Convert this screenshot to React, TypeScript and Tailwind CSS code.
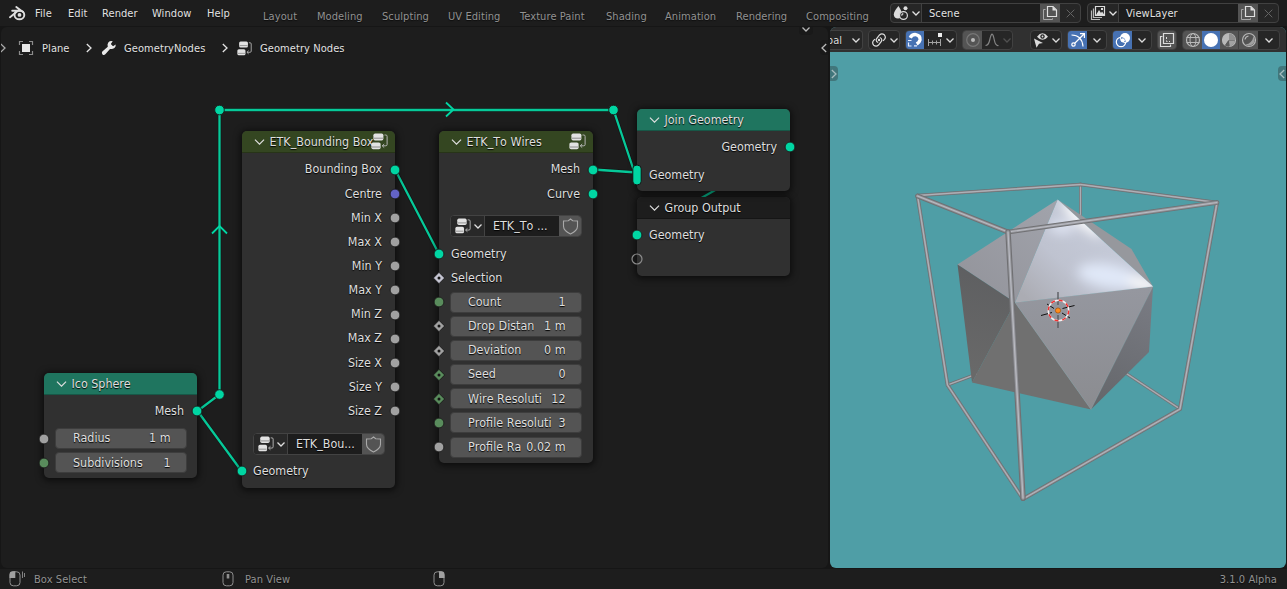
import React from "react";
import clsx from "clsx";

type Kids = { children?: React.ReactNode };

const Chevron = ({ w = 8, thin = false, className = "" }: { w?: number; thin?: boolean; className?: string }) => (
  <svg width={w} height={w / 2 + 1} viewBox="0 0 8 5" className={clsx("shrink-0", className)} fill="none" stroke="currentColor" strokeWidth={thin ? 0.9 : 1.3}>
    <path d="M.5.5 4 4 7.500.500" />
  </svg>
);

const ChevronRight = ({ className = "" }: { className?: string }) => (
  <svg width="6" height="10" viewBox="0 0 6 10" className={clsx("shrink-0", className)} fill="none" stroke="currentColor" strokeWidth="1.3">
    <path d="M.8 1 5 5 .8 9" />
  </svg>
);

const NodeTreeIcon = ({ size = 17 }: { size?: number }) => (
  <svg width={size} height={size} viewBox="0 0 17 17" className="shrink-0">
    <rect x="2.400" y=".6" width="10" height="6.800" rx="1.700" fill="#e2e2e2" />
    <rect x=".4" y="9.400" width="9.200" height="6.800" rx="1.700" fill="#e2e2e2" />
    <path d="M3 5.200h9M1 14h8" stroke="#777" strokeWidth=".8" />
    <path d="M13.500 2h1.300q1.300 0 1.300 1.300v8.200q0 1.300-1.300 1.300h-3.400M13.200 11l-2 1.800 2 1.800" fill="none" stroke="#b5b5b5" />
  </svg>
);

const Shield = () => (
  <svg width="17" height="17" viewBox="0 0 17 17" fill="none" stroke="#a8a8a8" strokeWidth="1.1">
    <path d="M8.500 1 10.700 2.800l4.800.2v5.200q0 4.400-7 7.700-7-3.300-7-7.700V3l4.800-.2z" />
  </svg>
);

const CopyIcon = () => (
  <svg width="16" height="16" viewBox="0 0 16 16" className="shrink-0" fill="none" stroke="#e0e0e0">
    <path d="M5.500 1.500H11L14.500 5v6.500h-9z" strokeWidth="1.200" />
    <path d="M10.500 1.500 14.500 5.500h-4z" fill="#e0e0e0" stroke="none" />
    <path d="M3.500 4.500h-2v10h9v-1.200" stroke="#a8a8a8" />
  </svg>
);

const CloseIcon = () => (
  <svg width="9" height="9" viewBox="0 0 9 9" stroke="#646464" strokeWidth="1">
    <path d="m.7.7 7.600 7.600M8.300.7.7 8.300" />
  </svg>
);

type SocketKind = "geo" | "vec" | "float" | "int" | "floatField" | "intField" | "selField" | "empty" | "multi";

const Socket = ({ kind, side }: { kind: SocketKind; side: "l" | "r" }) => {
  const fill = { geo: "#00d6a3", multi: "#00d6a3", vec: "#6363c7", float: "#a1a1a1", int: "#598c5c", floatField: "#a1a1a1", intField: "#598c5c", selField: "#c5c5d2", empty: "none" }[kind];
  const field = kind.endsWith("Field");
  return (
    <svg width="16" height="26" viewBox="-8 -13 16 26" className={clsx("absolute top-1/2 -translate-y-1/2", side === "l" ? "-left-2" : "-right-2")}>
      {field ? (
        <>
          <path d="M0-5.700 5.700 0 0 5.700-5.700 0z" fill={fill} stroke="#1a1a1a" strokeWidth="1" />
          <circle r="1.500" fill="#151515" />
        </>
      ) : kind === "multi" ? (
        <rect x="-4.200" y="-9.800" width="8.400" height="19.600" rx="3.600" fill={fill} stroke="#151515" />
      ) : (
        <circle r={kind === "empty" ? 5 : 4.9} fill={fill} stroke={kind === "empty" ? "#8b8b8b" : "#1a1a1a"} strokeWidth={kind === "empty" ? 1.2 : 0.9} />
      )}
    </svg>
  );
};

const Row = ({ kind, side = "l", children, className = "h-[24.17px]" }: { kind: SocketKind; side?: "l" | "r"; className?: string } & Kids) => (
  <div className={clsx("relative flex shrink-0 items-center px-3", side === "r" && "justify-end pr-[13px]", className)}>
    <Socket kind={kind} side={side} />
    {children}
  </div>
);

const Field = ({ kind, name, value }: { kind: SocketKind; name: string; value: string }) => (
  <Row kind={kind}>
    <div className="-ml-px flex h-[21px] w-[132px] shrink-0 items-center justify-between rounded-[4px] border border-[#3d3d3d] bg-[#545454] pr-[15.500px] pl-[17px]">
      <span className="whitespace-nowrap">{name}</span>
      <span className="whitespace-nowrap">{value}</span>
    </div>
  </Row>
);

const TreePicker = ({ name }: { name: string }) => (
  <div className="ml-[11px] flex h-[22px] w-[132px] shrink-0 overflow-hidden rounded-[4px] border border-[#434343] bg-[#1d1d1d]">
    <div className="flex w-[34px] items-center gap-[3px] border-r border-[#434343] bg-[#282828] pl-[4px]">
      <NodeTreeIcon size={16} />
      <Chevron w={8} />
    </div>
    <div className="flex flex-1 items-center pl-2 whitespace-nowrap">{name}</div>
    <div className="flex w-[22px] items-center justify-center bg-[#545454]">
      <Shield />
    </div>
  </div>
);

const Node = ({ title, pos, head, icon, children }: { title: string; pos: string; head: string; icon?: boolean } & Kids) => (
  <div className={clsx("absolute flex flex-col rounded-[5px] bg-[#303030] shadow-[0_1px_6px_2px_rgba(0,0,0,0.55)]", pos)}>
    <div className={clsx("relative flex h-[22px] shrink-0 items-center gap-[5px] rounded-t-[5px] border-b border-black/25 pt-px pl-[11.500px] whitespace-nowrap", head)}>
      <Chevron w={11} thin />
      <span>{title}</span>
      {icon && (
        <span className="absolute top-[2px] right-[7px]">
          <NodeTreeIcon />
        </span>
      )}
    </div>
    {children}
  </div>
);

const Group = ({ className, children }: { className: string } & Kids) => (
  <div className={clsx("flex shrink-0 overflow-hidden rounded-[4px] border border-[#414141] bg-[#262626]", className)}>{children}</div>
);

const Cell = ({ className, children }: { className: string } & Kids) => (
  <div className={clsx("flex shrink-0 items-center justify-center", className)}>{children}</div>
);

const Ico = ({ children, color = "#dcdcdc" }: { color?: string } & Kids) => (
  <svg width="16" height="16" viewBox="0 0 16 16" fill="none" stroke={color} strokeWidth="1.200" className="shrink-0">
    {children}
  </svg>
);

const menus: [string, string][] = [
  ["File", "w-[33px]"],
  ["Edit", "w-[34px]"],
  ["Render", "w-[50px]"],
  ["Window", "w-[55px]"],
  ["Help", "w-[56px]"],
];
const tabs: [string, string][] = [
  ["Layout", "w-[54px]"],
  ["Modeling", "w-[65px]"],
  ["Sculpting", "w-[66px]"],
  ["UV Editing", "w-[72px]"],
  ["Texture Paint", "w-[86px]"],
  ["Shading", "w-[59px]"],
  ["Animation", "w-[71px]"],
  ["Rendering", "w-[70px]"],
  ["Compositing", "w-[84px]"],
];

const TopBar = () => (
  <header className="flex h-[26px] shrink-0 bg-[#1d1d1d]">
    <div className="flex w-[35px] items-center pl-[9px]">
      <svg width="17" height="15" viewBox="0 0 17 15" fill="none" stroke="#dedede">
        <path d="M7.300 1 14 6.100M3.200 4.700h8M1 11.200l7-5.600" strokeWidth="1.900" strokeLinecap="round" />
        <ellipse cx="10.400" cy="8.900" rx="4.900" ry="4.400" strokeWidth="1.900" />
        <circle cx="10.500" cy="8.900" r="1.900" fill="#dedede" stroke="none" />
      </svg>
    </div>
    {menus.map(([t, w]) => (
      <div key={t} className={clsx("flex items-center text-[#e2e2e2]", w)}>{t}</div>
    ))}
    {tabs.map(([t, w]) => (
      <div key={t} className={clsx("flex items-center pt-[6px] whitespace-nowrap text-[#929292]", w)}>{t}</div>
    ))}
    <div className="flex items-center gap-[6px]">
      <Group className="h-5 w-[191px]">
        <Cell className="w-[31px] gap-[3px] border-r border-[#414141]">
          <Ico>
            <path d="M5.500 1Q9 6.500 9 9.500q0 4-4 4t-4.200-4Q.8 6.500 5.500 1z" fill="#dcdcdc" stroke="none" />
            <circle cx="10.500" cy="10.500" r="3.900" fill="#262626" />
            <path d="M8.600 10.600q.3-1.600 1.700-2" />
            <circle cx="12.500" cy="3.200" r="2" fill="#dcdcdc" stroke="none" />
          </Ico>
          <Chevron />
        </Cell>
        <div className="flex flex-1 items-center bg-[#1d1d1d] pl-[7px] text-[#e2e2e2]">Scene</div>
        <Cell className="w-5 bg-[#545454]"><CopyIcon /></Cell>
        <Cell className="w-5"><CloseIcon /></Cell>
      </Group>
      <Group className="h-5 w-[192px]">
        <Cell className="w-[31px] gap-[3px] border-r border-[#414141]">
          <Ico>
            <path d="M5.500 1.500h9v9h-9z" />
            <path d="m6 10 3-5 2 3 1-1.500 2.500 3.500zM11 3h2v2h-2z" fill="#dcdcdc" stroke="none" />
            <path d="M3.500 3.500v9H12M1.500 5.500v9H10" stroke="#b8b8b8" />
          </Ico>
          <Chevron />
        </Cell>
        <div className="flex flex-1 items-center bg-[#1d1d1d] pl-[7px] text-[#e2e2e2]">ViewLayer</div>
        <Cell className="w-5 bg-[#545454]"><CopyIcon /></Cell>
        <Cell className="w-5"><CloseIcon /></Cell>
      </Group>
    </div>
  </header>
);

const Links = () => (
  <svg className="absolute inset-0" width="827" height="542" viewBox="1 27 827 542" fill="none" strokeWidth="2.300">
    <path d="M197.500 411 219.500 394.500V110H613.500L634 171M197.500 411 241.500 471M395 169.500 439 254M593 169.500 637 172.500" stroke="#111" strokeWidth="3.800" opacity=".6" />
    <path d="M197.500 411 219.500 394.500V110H613.500L634 171M197.500 411 241.500 471M395 169.500 439 254M593 169.500 637 172.500M790 147 637 235" stroke="#06c999" />
    <path d="m212 233.500 7.500-7.500 7.500 7.500M446 102.500l7.500 7-7.500 7" stroke="#00d6a3" strokeWidth="1.800" />
    <g fill="#00d6a3" stroke="#1a1a1a" strokeWidth=".9">
      <circle cx="219.500" cy="394.500" r="4.800" />
      <circle cx="219.500" cy="110" r="4.800" />
      <circle cx="613.500" cy="110" r="4.800" />
    </g>
  </svg>
);

const boxOutputs = ["Min X", "Max X", "Min Y", "Max Y", "Min Z", "Max Z", "Size X", "Size Y", "Size Z"];
const wireInputs: [SocketKind, string, string][] = [
  ["int", "Count", "1"],
  ["floatField", "Drop Distan", "1 m"],
  ["floatField", "Deviation", "0 m"],
  ["intField", "Seed", "0"],
  ["intField", "Wire Resoluti", "12"],
  ["int", "Profile Resoluti", "3"],
  ["float", "Profile Ra", "0.02 m"],
];

const NodeEditor = () => (
  <section className="relative ml-px w-[827px] shrink-0 overflow-hidden rounded-[6px] bg-[#1d1d1d]">
    <div className="flex h-[42px] items-center text-[#e2e2e2]">
      <ChevronRight className="-ml-px text-[#aaa]" />
      <svg width="16" height="16" viewBox="0 0 16 16" className="ml-[12px]" fill="none" stroke="#8c8c8c" strokeWidth="1.200">
        <path d="M1.500 5V1.500H5M11 1.500h3.500V5M14.500 11v3.500H11M5 14.500H1.500V11" />
        <rect x="4" y="4" width="8" height="8" fill="#e8e8e8" stroke="none" />
      </svg>
      <span className="ml-2 w-[44px]">Plane</span>
      <ChevronRight />
      <svg width="16" height="16" viewBox="0 0 16 16" className="ml-[9px]">
        <path d="M14.700 4.400 12 6.200 9.800 4.100 11.700 1.200Q9 .5 7.300 2.500 6 4.200 6.800 6.700L1.300 11.500Q.3 13 1.500 14.400 3 15.500 4.300 14.300L9 8.900Q11.500 9.600 13.400 8 15 6.500 14.700 4.400Z" fill="#e8e8e8" />
      </svg>
      <span className="ml-[7px] w-[98px]">GeometryNodes</span>
      <ChevronRight />
      <span className="ml-[9px] w-[23px]"><NodeTreeIcon size={15} /></span>
      <span>Geometry Nodes</span>
    </div>
    <div className="absolute top-0 right-[15px] flex h-2 w-[14px] items-start justify-center rounded-b bg-[#191919] text-[#b8b8b8]"><Chevron w={8} /></div>
    <div className="absolute top-[13px] right-0 flex h-[15px] w-[8px] items-center rounded-l bg-[#191919] pl-px text-[#b8b8b8]"><ChevronRight className="rotate-180" /></div>
    <Links />
    <div className="text-[12.4px] leading-none tracking-normal text-[#dfdfdf] [text-shadow:0_1px_1px_#000]">
      <Node title="Group Output" pos="left-[636px] top-[170px] h-[79px] w-[153px]" head="bg-[#1d1d1d]">
        <Row kind="geo" className="mt-[4px] h-6">Geometry</Row>
        <Row kind="empty" className="h-[24px]" />
      </Node>
      <Node title="Join Geometry" pos="left-[636px] top-[82px] h-[82px] w-[153px]" head="bg-[#1f755f]">
        <Row kind="geo" side="r" className="mt-[4px] h-6">Geometry</Row>
        <Row kind="multi" className="mt-[4px] h-6">Geometry</Row>
      </Node>
      <Node title="ETK_Bounding Box" icon pos="left-[241px] top-[104px] h-[357px] w-[153px]" head="bg-[#344621]">
        <div className="h-[4.500px] shrink-0" />
        <Row kind="geo" side="r">Bounding Box</Row>
        <Row kind="vec" side="r">Centre</Row>
        {boxOutputs.map((o) => (
          <Row key={o} kind="float" side="r">{o}</Row>
        ))}
        <div className="h-[10px] shrink-0" />
        <TreePicker name="ETK_Bou..." />
        <Row kind="geo" className="mt-[4px] h-6">
          <span className="-ml-px">Geometry</span>
        </Row>
      </Node>
      <Node title="ETK_To Wires" icon pos="left-[438px] top-[104px] h-[332px] w-[154px] [font-kerning:none]" head="bg-[#344621]">
        <div className="h-[4.500px] shrink-0" />
        <Row kind="geo" side="r">Mesh</Row>
        <Row kind="geo" side="r">Curve</Row>
        <div className="h-[9.500px] shrink-0" />
        <TreePicker name="ETK_To ..." />
        <div className="h-[4.500px] shrink-0" />
        <Row kind="geo">Geometry</Row>
        <Row kind="selField">Selection</Row>
        {wireInputs.map(([k, n, v]) => (
          <Field key={n} kind={k} name={n} value={v} />
        ))}
      </Node>
      <Node title="Ico Sphere" pos="left-[43px] top-[346px] h-[105px] w-[153px]" head="bg-[#1f755f]">
        <Row kind="geo" side="r" className="mt-[4px] h-6">Mesh</Row>
        <div className="h-[3.500px] shrink-0" />
        <Field kind="float" name="Radius" value="1 m" />
        <Field kind="int" name="Subdivisions" value="1" />
      </Node>
    </div>
  </section>
);

const ViewHeader = () => (
  <div className="flex h-[25px] shrink-0 items-center bg-[#303030] pt-px text-[#dcdcdc]">
    <Group className="h-5 w-[33px] rounded-l-none border-l-0">
      <Cell className="w-[32px] gap-[10px]"><span className="-ml-[5px]">bal</span><Chevron /></Cell>
    </Group>
    <Group className="ml-[5px] h-5 w-8">
      <Cell className="w-[30px] gap-[3px]">
        <Ico>
          <path d="M7.200 10.500Q4.500 9.500 5.500 6.800L8.500 3q2.300-2.200 4.800-.200 2 2.300.200 4.500L12 8.800M8.800 5.500Q11.500 6.500 10.500 9.200L7.500 13q-2.300 2.200-4.800.200-2-2.300-.200-4.500L4 7.200" />
          <circle cx="8" cy="8" r="1.200" fill="#dcdcdc" stroke="none" />
        </Ico>
        <Chevron />
      </Cell>
    </Group>
    <Group className="ml-[5px] h-5 w-[52px]">
      <Cell className="w-[18px] bg-[#4772b3]">
        <Ico color="#fff">
          <path d="M3.200 5.800Q5 2.300 8.800 2.600q4.700.900 4.200 5.200-.500 2.400-3.300 4.200" strokeWidth="3.400" />
          <path d="M1 8.500h3.500M1.500 10.500V14h3M7 13.800h3" stroke="#e6edff" />
        </Ico>
      </Cell>
      <Cell className="w-[32px] gap-[3px]">
        <Ico>
          <path d="M1.500 7v7M5.500 8.500v4M9.500 8.500v4M13.500 7v7M1.500 10.500h12" stroke="#a2a2a2" strokeWidth="1" />
          <path d="M11 1h4v4h-4z" fill="#eee" stroke="none" />
        </Ico>
        <Chevron />
      </Cell>
    </Group>
    <Group className="ml-[5px] h-5 w-[51px]">
      <Cell className="w-[19px] bg-[#545454]">
        <Ico color="#777"><circle cx="8" cy="8" r="6.300" /><circle cx="8" cy="8" r="2" fill="#bbb" stroke="none" /></Ico>
      </Cell>
      <Cell className="w-[30px] gap-[3px]">
        <Ico color="#858585"><path d="M1.500 13.500Q4.500 13.500 5.700 8T8 2.200t2.300 5.800 4.200 5.500" /></Ico>
        <Chevron className="text-[#505050]" />
      </Cell>
    </Group>
    <Group className="ml-[17px] h-5 w-8">
      <Cell className="w-[30px] gap-[3px]">
        <Ico>
          <path d="M4 4.700Q9.400-2 15 4.700 9.500 11 4 4.700z" fill="#dcdcdc" stroke="none" />
          <circle cx="9.500" cy="4.500" r="2.200" fill="#262626" stroke="none" />
          <circle cx="9.500" cy="4.500" r=".9" fill="#dcdcdc" stroke="none" />
          <path d="m1 6.500 9 4.500-4 .7-2.500 4z" fill="#dcdcdc" stroke="none" />
        </Ico>
        <Chevron />
      </Cell>
    </Group>
    <Group className="ml-[5px] h-5 w-[40px]">
      <Cell className="w-[19px] bg-[#4772b3]">
        <Ico color="#fff">
          <path d="M1.500 3Q12 3 13 14.500M4.500 11.500 14 2M10 1.600h4.400V6" />
          <circle cx="3.500" cy="12.500" r="1.700" />
        </Ico>
      </Cell>
      <Cell className="w-[19px]"><Chevron /></Cell>
    </Group>
    <Group className="ml-[5px] h-5 w-[40px]">
      <Cell className="w-[19px] bg-[#4772b3]">
        <Ico color="#fff">
          <circle cx="10" cy="6" r="5" fill="#fff" stroke="none" />
          <circle cx="6" cy="10" r="4.700" />
          <path d="M6 5.300q4.500 0 4.700 4.700Q6 10.800 6 5.300z" fill="#4772b3" stroke="none" />
          <circle cx="7.800" cy="8.200" r="2" fill="#fff" stroke="none" />
        </Ico>
      </Cell>
      <Cell className="w-[19px]"><Chevron /></Cell>
    </Group>
    <Group className="ml-[5px] h-5 w-[20px]">
      <Cell className="w-[18px] bg-[#545454]">
        <Ico><path d="M4.500 1.500h10v10h-10z" /><path d="M3.500 4.500h-2v10h10v-2" /><path d="M7.500 5v4.500H11" strokeWidth="1" strokeDasharray="2 1.500" /></Ico>
      </Cell>
    </Group>
    <Group className="ml-[5px] h-5 w-[98px]">
      <Cell className="w-[19px] bg-[#545454]">
        <Ico color="#b8b8b8"><circle cx="8" cy="8" r="6.500" /><ellipse cx="8" cy="8" rx="3" ry="6.500" strokeWidth="1" /><path d="M1.500 5.500h13M1.500 10.500h13" strokeWidth="1" /></Ico>
      </Cell>
      <Cell className="w-[18px] bg-[#4772b3]"><Ico><circle cx="8" cy="8" r="7" fill="#fff" stroke="none" /></Ico></Cell>
      <Cell className="w-[19px] border-r border-[#414141] bg-[#545454]">
        <Ico color="#b8b8b8">
          <circle cx="8" cy="8" r="6.500" />
          <path d="M8 1.500V8H14.500Q14.300 2.500 8 1.500z" fill="#8f8f8f" stroke="none" />
          <path d="M8 1.500V8L4 13Q1 10 1.500 7.500 2.500 2 8 1.500z" fill="#b8b8b8" stroke="none" />
          <path d="M8 8.500h6q-.5 4.500-5.500 6z" fill="#a2a2a2" stroke="none" />
          <path d="M7.500 8 4 13.500q2 1.500 4.500 1z" fill="#5c5c5c" stroke="none" />
        </Ico>
      </Cell>
      <Cell className="w-[19px] bg-[#545454]">
        <Ico color="#b8b8b8"><circle cx="8" cy="8" r="6.500" /><path d="M4 7.500Q4.500 4.500 7.500 4" /><path d="M4.500 12.500Q11 11.500 12.500 4.500 15 8.500 12 12q-4 3-7.500.500z" fill="#a0a0a0" stroke="none" /></Ico>
      </Cell>
      <Cell className="w-[21px]"><Chevron /></Cell>
    </Group>
  </div>
);

const Tube = ({ d, w }: { d: string; w: number }) => (
  <g fill="none" strokeLinecap="round">
    <path d={d} stroke="#707073" strokeWidth={w} />
    <path d={d} stroke="#95969b" strokeWidth={w * 0.6} />
    <path d={d} stroke="#b9bac2" strokeWidth={w * 0.22} />
  </g>
);

const Scene = () => (
  <svg width="456" height="516" viewBox="830 52 456 516" className="block">
    <defs>
      <linearGradient id="main" gradientUnits="userSpaceOnUse" x1="1030" y1="302" x2="1100" y2="230">
        <stop offset="0" stopColor="#abacb3" /><stop offset=".5" stopColor="#bfc3d0" /><stop offset="1" stopColor="#c5cad8" />
      </linearGradient>
      <linearGradient id="left" gradientUnits="userSpaceOnUse" x1="970" y1="300" x2="1050" y2="210">
        <stop offset="0" stopColor="#93949b" /><stop offset="1" stopColor="#a0a2aa" />
      </linearGradient>
      <linearGradient id="front" gradientUnits="userSpaceOnUse" x1="1090" y1="290" x2="1090" y2="409">
        <stop offset="0" stopColor="#95979f" /><stop offset="1" stopColor="#8b8c90" />
      </linearGradient>
      <linearGradient id="side" gradientUnits="userSpaceOnUse" x1="1150" y1="290" x2="1095" y2="400">
        <stop offset="0" stopColor="#7a7c84" /><stop offset="1" stopColor="#65676b" />
      </linearGradient>
      <linearGradient id="dark" gradientUnits="userSpaceOnUse" x1="1000" y1="270" x2="980" y2="375">
        <stop offset="0" stopColor="#5e5f61" /><stop offset="1" stopColor="#696969" />
      </linearGradient>
      <filter id="soft" x="-60%" y="-60%" width="220%" height="220%"><feGaussianBlur stdDeviation="6" /></filter>
      <clipPath id="face"><path d="M1057.700 199.500 1015 302.500 1153 286.500Z" /></clipPath>
    </defs>
    <Tube d="M1080.500 184V220" w={2.8} />
    <Tube d="M947.500 385 990 369M1180 409 1115 366" w={3} />
    <path d="M1057.700 199.500 1131.500 249 1153 286.500Z" fill="#96989d" />
    <path d="M1057.700 199.500 957.500 264.500 1015 302.500Z" fill="url(#left)" />
    <path d="M957.500 264.500 972 382.500 1015 302.500Z" fill="url(#dark)" />
    <path d="M1015 302.500 972 382.500 1091 409.500Z" fill="#707070" />
    <path d="M1015 302.500 1091 409.500 1153 286.500Z" fill="url(#front)" />
    <path d="M1153 286.500 1149 352 1091 409.500Z" fill="url(#side)" />
    <path d="M1057.700 199.500 1015 302.500 1153 286.500Z" fill="url(#main)" />
    <g clipPath="url(#face)">
      <g filter="url(#soft)">
        <ellipse cx="1108" cy="276" rx="31" ry="12" fill="#e0e8f8" transform="rotate(10 1108 276)" />
        <ellipse cx="1143" cy="284" rx="16" ry="6" fill="#fff" transform="rotate(15 1143 284)" />
        <ellipse cx="1082" cy="218" rx="26" ry="7" fill="#fff" transform="rotate(42 1082 218)" />
        <ellipse cx="1062" cy="227" rx="13" ry="6" fill="#e2e7f5" />
      </g>
    </g>
    <path d="M1015 302.500 1153 286.500 1091 409.500Z" fill="none" stroke="#b5b6ba" strokeWidth=".4" opacity=".5" />
    <Tube d="M917.500 195.500 1080.500 184.500 1217 202.500" w={3.6} />
    <Tube d="M917.500 195.500 947.500 385 1023 499" w={3.7} />
    <Tube d="M1217 202.500 1180 409 1023 499" w={4} />
    <Tube d="M917.500 196 1008 232 1217 202.500" w={4.7} />
    <Tube d="M1008 232 1023 498" w={5.5} />
    <g stroke="#111" strokeWidth="1">
      <path d="m1041 315.500 11-3M1047 304l7 4.500M1062.500 308.500l12-3M1062 313l8 5" />
      <path d="M1058 292v13M1058 315v13" stroke="#55565a" strokeWidth="1.300" />
    </g>
    <circle cx="1058.500" cy="310.500" r="10.200" fill="none" stroke="#f4f4f4" strokeWidth="1.500" />
    <circle cx="1058.500" cy="310.500" r="10.200" fill="none" stroke="#f03030" strokeWidth="1.500" strokeDasharray="4 4" />
    <circle cx="1058" cy="310.500" r="2.600" fill="#ff8d1c" stroke="#a34f08" strokeWidth=".7" />
  </svg>
);

const Viewport = () => (
  <section className="relative ml-[2px] w-[456px] shrink-0 overflow-hidden rounded-[6px] bg-[#4f9ea6]">
    <ViewHeader />
    <Scene />
    <div className="absolute top-[39px] left-0 flex h-[15px] w-[8px] items-center rounded-r bg-[#41767b] pl-px text-[#a3bbbd]"><ChevronRight /></div>
    <div className="absolute top-[39px] right-0 flex h-[15px] w-[8px] items-center rounded-l bg-[#41767b] pl-px text-[#a3bbbd]"><ChevronRight className="rotate-180" /></div>
  </section>
);

const Mouse = ({ part }: { part: "l" | "m" | "r" }) => (
  <svg width="18" height="16" viewBox="0 0 18 16" fill="none" stroke="#8f8f8f" className="shrink-0">
    <rect x="1" y=".8" width="10" height="14" rx="3.300" />
    {part === "l" && <path d="M.5 7V3.500Q.5.300 4 .300h2.300V7z" fill="#a0a0a0" stroke="none" />}
    {part === "l" && <path d="M13.500.5v6.500M15.500 2v4" strokeWidth=".9" />}
    {part === "m" && <path d="M6 3v4.500" strokeWidth="2.600" />}
    {part === "r" && <path d="M11.500 7V3.500q0-3.200-3.200-3.200H6V7z" fill="#a0a0a0" stroke="none" />}
  </svg>
);

const StatusBar = () => (
  <footer className="flex h-5 shrink-0 items-center bg-[#1d1d1d] pl-[9px] text-[#929292]">
    <Mouse part="l" />
    <span className="ml-[7px] w-[188px]">Box Select</span>
    <Mouse part="m" />
    <span className="ml-[5px] w-[188px]">Pan View</span>
    <Mouse part="r" />
    <span className="mr-[10px] ml-auto">3.1.0 Alpha</span>
  </footer>
);

export default function App() {
  return (
    <div className="flex h-[589px] w-[1287px] flex-col overflow-hidden bg-[#161616] text-[11px] leading-none tracking-[0.08px] text-[#e2e2e2] [font-family:'DejaVu_Sans_Condensed','DejaVu_Sans',sans-serif] [font-stretch:condensed] [text-shadow:0_1px_1px_rgba(0,0,0,0.6)]">
      <TopBar />
      <main className="mt-px mb-px flex min-h-0 flex-1">
        <NodeEditor />
        <Viewport />
      </main>
      <StatusBar />
    </div>
  );
}
